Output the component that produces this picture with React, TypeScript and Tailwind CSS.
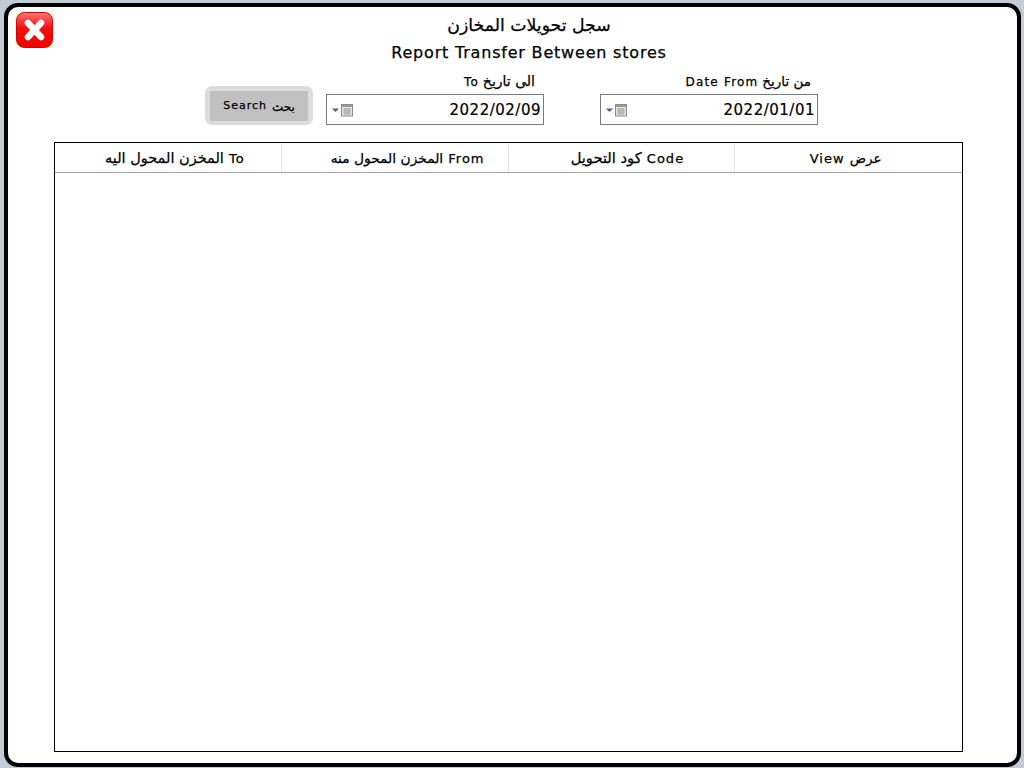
import React from "react";

const font = { fontFamily: '"DejaVu Sans", sans-serif' };

function Ar({ children, size }: { children: React.ReactNode; size: string }) {
  return <span className={size}>{children}</span>;
}

function CalIcon() {
  return (
    <svg width="22" height="14" viewBox="0 0 22 14" className="block">
      <path d="M0 5.5h7L3.5 9z" fill="#4a5f80" />
      <rect x="9.5" y="1.5" width="11" height="11.5" fill="#e6e6e6" stroke="#8a8a8a" />
      <rect x="10" y="2" width="10" height="2" fill="#9a9a9a" />
      <path d="M11 6h8M11 8h8M11 10h8M13 5v7M15 5v7M17 5v7" stroke="#a8a8a8" strokeWidth="1" />
    </svg>
  );
}

function DateField({ label, value, labelClass }: { label: React.ReactNode; value: string; labelClass: string }) {
  return (
    <div className="flex w-[218px] flex-col">
      <div dir="rtl" className={`h-[25px] pt-[3px] text-right text-[12px] leading-[18px] tracking-[1.2px] text-black [-webkit-text-stroke:0.25px_#000] ${labelClass}`}>
        {label}
      </div>
      <div className="flex h-[31px] items-center justify-between border border-[#7a7a7a] bg-white pl-[5px] pr-[2px]">
        <CalIcon />
        <span className="text-[15px] leading-[20px] tracking-[0.5px] text-black [-webkit-text-stroke:0.2px_#000]">{value}</span>
      </div>
    </div>
  );
}

export default function App() {
  return (
    <div className="h-[768px] w-[1024px] bg-[#c3ccd6] pb-[1px] pl-[4px] pr-[3px] pt-[3px]" style={font}>
      <div className="relative flex h-[764px] flex-col rounded-[14px] border-[4px] border-black bg-white">
        <button className="absolute left-[8px] top-[5px] h-[36px] w-[37px] rounded-[3px] bg-[#fdfbc8] p-0">
          <svg width="37" height="36" viewBox="0 0 37 36" className="block">
            <defs>
              <linearGradient id="r" x1="0" y1="0" x2="0" y2="1">
                <stop offset="0" stopColor="#f77" />
                <stop offset="0.45" stopColor="#f01010" />
                <stop offset="1" stopColor="#f00000" />
              </linearGradient>
            </defs>
            <rect x="0.5" y="0.5" width="36" height="35" rx="8" fill="url(#r)" stroke="#d80000" />
            <path d="M12 11L25 25M25 11L12 25" stroke="#fff" strokeWidth="6.5" strokeLinecap="round" />
          </svg>
        </button>

        <div className="flex flex-col items-center pl-[33px] pt-[5px] text-black [-webkit-text-stroke:0.25px_#000]">
          <div className="text-[17.3px] leading-[27px] tracking-[1px]">سجل تحويلات المخازن</div>
          <div className="text-[16px] leading-[27px] tracking-[0.8px]">Report Transfer Between stores</div>
        </div>

        <div className="mt-[3px] flex items-end pl-[197px]">
          <div className="mr-[13px] flex h-[39px] w-[108px] items-center justify-center rounded-[7px] bg-[#dcdcdc]">
            <div className="flex h-[30px] w-[98px] items-center justify-center bg-[#c0c0c0] pt-[2px] text-[11px] tracking-[1px] text-black [-webkit-text-stroke:0.25px_#000]">
              Search <Ar size="ml-[5px] text-[12px]">بحث</Ar>
            </div>
          </div>
          <DateField labelClass="pr-[9px]" label={<><Ar size="text-[14px]">الى تاريخ</Ar> To</>} value="2022/02/09" />
          <div className="w-[56px]" />
          <DateField labelClass="pr-[7px]" label={<><Ar size="text-[13.5px]">من تاريخ</Ar> Date From</>} value="2022/01/01" />
        </div>

        <div className="ml-[46px] mr-[54px] mt-[17px] flex h-[610px] flex-col border border-black">
          <div className="grid h-[30px] grid-cols-4 border-b border-[#a0a0a0] pt-[2px] text-[13px] tracking-[1px] text-black [-webkit-text-stroke:0.25px_#000]">
            <div dir="rtl" className="flex items-center justify-center border-r border-[#e2e2e2] pl-[14px]">
              <span>To <Ar size="text-[14.5px]">المخزن المحول اليه</Ar></span>
            </div>
            <div dir="rtl" className="flex items-center justify-center border-r border-[#e2e2e2] pl-[26px]">
              <span>From <Ar size="text-[13.8px]">المخزن المحول منه</Ar></span>
            </div>
            <div dir="rtl" className="flex items-center justify-center border-r border-[#e2e2e2] pl-[12px]">
              <span>Code <Ar size="text-[14.7px]">كود التحويل</Ar></span>
            </div>
            <div className="flex items-center justify-center pr-[6px]">
              <span>View <Ar size="text-[13.5px]">عرض</Ar></span>
            </div>
          </div>
        </div>
      </div>
    </div>
  );
}
